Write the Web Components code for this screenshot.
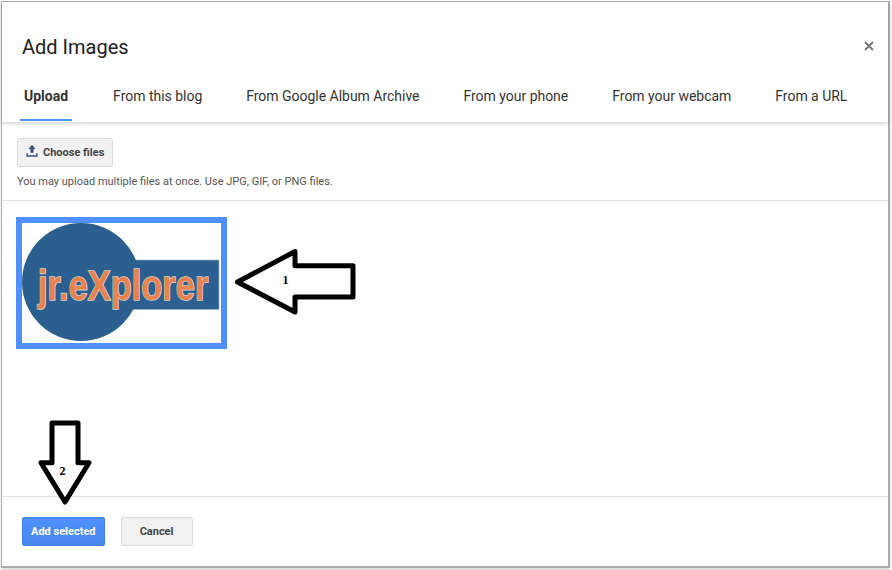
<!DOCTYPE html>
<html>
<head>
<meta charset="utf-8">
<title>Add Images</title>
<style>
    html, body { margin: 0; height: 100%; }
    body { background: #fff; font-family: Roboto, "Liberation Sans", sans-serif; overflow: hidden; }
</style>
</head>
<body>
<add-images-dialog>
    <image-tab slot="tabs" active>Upload</image-tab>
    <image-tab slot="tabs">From this blog</image-tab>
    <image-tab slot="tabs">From Google Album Archive</image-tab>
    <image-tab slot="tabs">From your phone</image-tab>
    <image-tab slot="tabs">From your webcam</image-tab>
    <image-tab slot="tabs">From a URL</image-tab>

    <upload-pane slot="body">
        <g-button slot="action" icon>Choose files</g-button>
        <span slot="hint">You may upload multiple files at once. Use JPG, GIF, or PNG files.</span>
        <logo-thumb slot="thumbs"></logo-thumb>
    </upload-pane>

    <g-button slot="footer" primary>Add selected</g-button>
    <g-button slot="footer">Cancel</g-button>

    <note-arrow slot="notes" dir="left" label="1"></note-arrow>
    <note-arrow slot="notes" dir="down" label="2"></note-arrow>
</add-images-dialog>

<script>
class AddImagesDialog extends HTMLElement {
    constructor() {
        super();
        this.attachShadow({ mode: 'open' });
        this.shadowRoot.innerHTML = `
        <style>
            :host {
                display: flex;
                flex-direction: column;
                position: relative;
                box-sizing: border-box;
                width: 889px;
                height: 567px;
                margin: 1px 0 0 1px;
                background: #fff;
                border: 1px solid #acacac;
                border-right-width: 2px;
                border-bottom-width: 2px;
                box-shadow: 0 3px 3px rgba(0,0,0,.14);
            }
            header {
                position: relative;
                height: 120px;
                flex: none;
                box-shadow: 0 2px 4px rgba(0,0,0,.16);
            }
            h1 {
                margin: 0;
                padding: 33px 0 0 20px;
                font: 400 20px/24px Roboto, sans-serif;
                color: #212121;
            }
            .close {
                position: absolute;
                top: 39px;
                right: 14px;
                width: 10px;
                height: 10px;
            }
            nav {
                display: flex;
                gap: 36px;
                padding: 25px 0 0 18px;
            }
            main { flex: 1; min-height: 0; }
            footer {
                flex: none;
                display: flex;
                gap: 16px;
                height: 70px;
                padding: 20px 0 0 20px;
                box-sizing: border-box;
                border-top: 1px solid #e1e1e1;
            }
        </style>
        <header>
            <h1>Add Images</h1>
            <svg class="close" viewBox="0 0 10 10"><path d="M1 1l8 8M9 1l-8 8" stroke="#777" stroke-width="2"/></svg>
            <nav><slot name="tabs"></slot></nav>
        </header>
        <main><slot name="body"></slot></main>
        <footer><slot name="footer"></slot></footer>
        <slot name="notes"></slot>
        `;
    }
}

class ImageTab extends HTMLElement {
    constructor() {
        super();
        this.attachShadow({ mode: 'open' });
        this.shadowRoot.innerHTML = `
        <style>
            :host {
                display: block;
                box-sizing: border-box;
                height: 37px;
                padding: 0 4px;
                font: 400 14px/24px Roboto, sans-serif;
                letter-spacing: -.02px;
                color: #333;
                white-space: nowrap;
                border-bottom: 2px solid transparent;
            }
            :host([active]) {
                margin-right: 1px;
                font-weight: 700;
                letter-spacing: 0;
                border-bottom-color: #4d90fe;
            }
        </style>
        <slot></slot>
        `;
    }
}

class GButton extends HTMLElement {
    constructor() {
        super();
        this.attachShadow({ mode: 'open' });
        const icon = this.hasAttribute('icon')
            ? '<svg viewBox="0 0 12 12" width="12" height="12"><path d="M6 0L2.3 3.9H4.4V7.8H7.6V3.9H9.7Z M0.4 8.3H1.8V10.2H10.2V8.3H11.6V11.8H0.4Z" fill="#3f4f7d"/></svg>'
            : '';
        this.shadowRoot.innerHTML = `
        <style>
            :host {
                display: inline-flex;
                align-items: center;
                justify-content: center;
                gap: 5px;
                box-sizing: border-box;
                height: 29px;
                padding: 0 8px;
                min-width: 72px;
                font: 700 11px/27px Roboto, sans-serif;
                color: #444;
                background: #f1f1f1;
                border: 1px solid #dcdcdc;
                border-radius: 2px;
                white-space: nowrap;
            }
            :host([primary]) {
                color: #fff;
                background: linear-gradient(#4d90fe, #4787ed);
                border-color: #3f82ef;
            }
            :host([icon]) { width: 96px; justify-content: flex-start; }
            svg { flex: none; margin-bottom: 3px; }
        </style>
        ${icon}<slot></slot>
        `;
    }
}

class UploadPane extends HTMLElement {
    constructor() {
        super();
        this.attachShadow({ mode: 'open' });
        this.shadowRoot.innerHTML = `
        <style>
            :host { display: block; }
            .top {
                box-sizing: border-box;
                height: 79px;
                padding: 16px 0 0 15px;
                border-bottom: 1px solid #e1e1e1;
            }
            .hint {
                margin-top: 7px;
                font: 400 11px/16px Roboto, sans-serif;
                color: #555;
            }
            .thumbs { padding: 16px 0 0 14px; }
        </style>
        <div class="top">
            <slot name="action"></slot>
            <div class="hint"><slot name="hint"></slot></div>
        </div>
        <div class="thumbs"><slot name="thumbs"></slot></div>
        `;
    }
}

class LogoThumb extends HTMLElement {
    constructor() {
        super();
        this.attachShadow({ mode: 'open' });
        this.shadowRoot.innerHTML = `
        <style>
            :host {
                display: block;
                box-sizing: border-box;
                width: 211px;
                height: 132px;
                border: 6px solid #4f8fff;
                background: #fff;
            }
            svg { display: block; }
            text { font: 700 42px "Liberation Sans", sans-serif; paint-order: stroke; }
        </style>
        <svg width="199" height="120" viewBox="22 223 199 120">
            <rect x="120" y="260" width="99" height="49.5" fill="#2a5f8f" stroke="#9db6cc" stroke-width=".6"/>
            <circle cx="81" cy="282" r="59" fill="#2a5f8f"/>
            <text transform="translate(38 300) scale(.82 1)" fill="#e8834f" stroke="#d9cfc8" stroke-width="1.6">jr.eXplorer</text>
        </svg>
        `;
    }
}

class NoteArrow extends HTMLElement {
    constructor() {
        super();
        this.attachShadow({ mode: 'open' });
        const left = this.getAttribute('dir') === 'left';
        // points are local to the host box, placed over the dialog by :host
        const pts = left
            ? '1.5,32 59,1.5 59,15.8 117,15.8 117,47 59,47 59,62'
            : '13,2 39,2 39,41.7 50,41.7 26,81 2,41.7 13,41.7';
        const size = left ? [120, 66] : [54, 86];
        const at = left ? 'left: 234px; top: 248px;' : 'left: 37px; top: 419px;';
        const lab = left ? 'x="49.5" y="34.3"' : 'x="23.5" y="54"';
        this.shadowRoot.innerHTML = `
        <style>
            :host { position: absolute; ${at} width: ${size[0]}px; height: ${size[1]}px; }
            svg { display: block; overflow: visible; }
            text { font: 700 12px "Liberation Serif", serif; fill: #000; text-anchor: middle; }
        </style>
        <svg width="${size[0]}" height="${size[1]}">
            <polygon points="${pts}" fill="#fff" stroke="#000" stroke-width="5" stroke-linejoin="round"/>
            <text ${lab}>${this.getAttribute('label')}</text>
        </svg>
        `;
    }
}

customElements.define('image-tab', ImageTab);
customElements.define('g-button', GButton);
customElements.define('logo-thumb', LogoThumb);
customElements.define('upload-pane', UploadPane);
customElements.define('note-arrow', NoteArrow);
customElements.define('add-images-dialog', AddImagesDialog);
</script>
</body>
</html>
